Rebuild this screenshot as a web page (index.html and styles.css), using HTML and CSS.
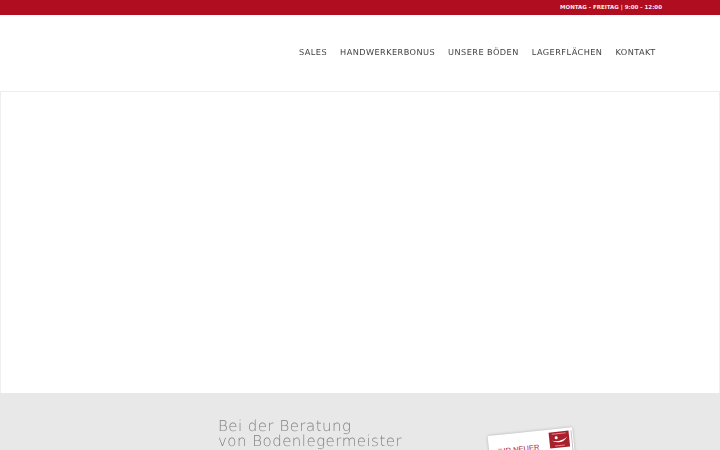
FILE: index.html
```html
<!DOCTYPE html>
<html lang="de">
<head>
<meta charset="utf-8">
<title>Bodenleger</title>
<link rel="stylesheet" href="styles.css">
</head>
<body>
<div class="topbar"><span class="hours">MONTAG - FREITAG | 9:00 - 12:00</span></div>
<header class="header">
  <nav class="nav">
    <a>SALES</a>
    <a>HANDWERKERBONUS</a>
    <a>UNSERE BÖDEN</a>
    <a>LAGERFLÄCHEN</a>
    <a>KONTAKT</a>
  </nav>
</header>
<section class="hero"></section>
<section class="promo">
  <h2 class="promo-title">Bei der Beratung<br>von Bodenlegermeister</h2>
  <div class="card">
    <span class="card-text">IHR NEUER</span>
    <div class="card-badge">
      <svg viewBox="0 0 20 16" width="20" height="16"><path d="M3 2h14M5 14h10" stroke="#e9b4b9" stroke-width=".7" fill="none"/><circle cx="7" cy="6" r="1.500" fill="#fff"/><path d="M2.500 8.500 Q11 11 18 6 Q12 14 2.500 8.500Z" fill="#fff"/></svg>
    </div>
    <div class="card-spine"></div>
  </div>
</section>
</body>
</html>
```
FILE: styles.css
```css
html, body { margin: 0; padding: 0; }
body {
  width: 720px;
  height: 450px;
  overflow: hidden;
  background: #fff;
  font-family: "DejaVu Sans", sans-serif;
  text-rendering: geometricPrecision;
}
.topbar {
  height: 15px;
  background: #b00d20;
  display: flex;
  justify-content: flex-end;
  align-items: center;
  padding-right: 58px;
}
.hours {
  font-size: 5.5px;
  font-weight: 700;
  color: #fbeaec;
  letter-spacing: 0;
}
.header {
  height: 76px;
  display: flex;
  justify-content: flex-end;
  padding: 30px 64px 0 0;
  box-sizing: border-box;
}
.nav {
  display: flex;
  gap: 13px;
  height: 14px;
  align-items: center;
  will-change: transform;
}
.nav a {
  font-size: 8.2px;
  color: #444;
  letter-spacing: 0.43px;
}
.hero {
  height: 302px;
  box-sizing: border-box;
  border: 1px solid #eeeeee;
  border-bottom: 0;
  background: #fff;
}
.promo {
  height: 57px;
  background: #e8e8e8;
  display: flex;
  overflow: hidden;
  padding: 26px 0 0 218px;
  box-sizing: border-box;
  position: relative;
}
.promo-title {
  margin: 0;
  font-family: "DejaVu Sans ExtraLight", "DejaVu Sans", sans-serif;
  font-weight: 200;
  font-size: 15px;
  line-height: 15px;
  letter-spacing: 0.47px;
  color: #808080;
  will-change: transform;
}
.card {
  position: absolute;
  left: 488px;
  top: 43px;
  width: 85px;
  height: 60px;
  background: #fff;
  transform: rotate(-6deg);
  transform-origin: 0 4px;
  box-shadow: 0 0 3px rgba(0,0,0,.25);
}
.card-text {
  position: absolute;
  left: 9px;
  top: 12px;
  font-size: 7.5px;
  color: #a8202c;
  font-family: "Liberation Sans", sans-serif;
}
.card-badge {
  position: absolute;
  right: 4px;
  top: 3px;
  width: 20px;
  height: 16px;
  background: #a8202c;
  display: flex;
  align-items: center;
  justify-content: center;
}
.card-spine {
  position: absolute;
  right: 1px;
  top: 3px;
  width: 1px;
  height: 20px;
  background: #c4c4c4;
}
```
